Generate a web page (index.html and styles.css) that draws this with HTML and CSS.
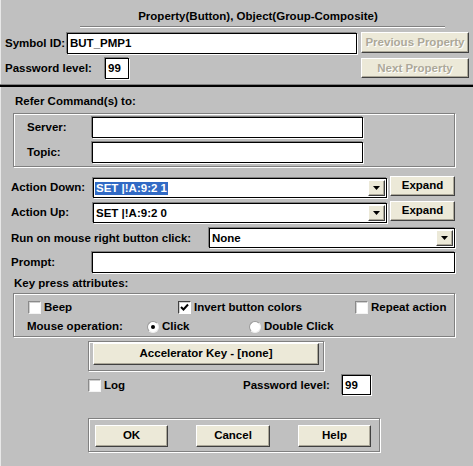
FILE: index.html
```html
<!DOCTYPE html>
<html>
<head>
<meta charset="utf-8">
<link rel="stylesheet" href="styles.css">
</head>
<body>
<div class="top">
  <div class="title">Property(Button), Object(Group-Composite)</div>
  <div class="title-rule"></div>
  <div class="row row-sym">
    <span class="lbl lbl-sym">Symbol ID:</span>
    <div class="field f-sym">BUT_PMP1</div>
    <div class="btn btn-nav disabled">Previous Property</div>
  </div>
  <div class="row row-pw">
    <span class="lbl lbl-pw">Password level:</span>
    <div class="field f-pw">99</div>
    <div class="btn btn-nav btn-next disabled">Next Property</div>
  </div>
</div>
<div class="sep"></div>
<div class="main">
  <div class="refer">Refer Command(s) to:</div>
  <div class="group g1">
    <div class="srow">
      <span class="lbl lbl-srv">Server:</span>
      <div class="field f-srv"></div>
    </div>
    <div class="srow">
      <span class="lbl lbl-srv">Topic:</span>
      <div class="field f-srv"></div>
    </div>
  </div>
  <div class="arow arow-down">
    <span class="lbl lbl-act">Action Down:</span>
    <div class="combo c-act"><span class="sel">SET |!A:9:2 1</span><span class="drop"><svg width="7" height="4" viewBox="0 0 7 4"><path d="M0 0H7L3.5 4Z" fill="#000"/></svg></span></div>
    <div class="btn btn-exp">Expand</div>
  </div>
  <div class="arow arow-up">
    <span class="lbl lbl-act">Action Up:</span>
    <div class="combo c-act"><span class="ctext">SET |!A:9:2 0</span><span class="drop"><svg width="7" height="4" viewBox="0 0 7 4"><path d="M0 0H7L3.5 4Z" fill="#000"/></svg></span></div>
    <div class="btn btn-exp">Expand</div>
  </div>
  <div class="rrow">
    <span class="lbl lbl-run">Run on mouse right button click:</span>
    <div class="combo c-run"><span class="ctext">None</span><span class="drop"><svg width="7" height="4" viewBox="0 0 7 4"><path d="M0 0H7L3.5 4Z" fill="#000"/></svg></span></div>
  </div>
  <div class="prow">
    <span class="lbl lbl-prompt">Prompt:</span>
    <div class="field f-prompt"></div>
  </div>
  <div class="keylbl">Key press attributes:</div>
  <div class="group g2">
    <div class="krow">
      <div class="cell c1"><span class="cb"></span><span class="ctl">Beep</span></div>
      <div class="cell c2"><span class="cb checked"><svg width="9" height="9" viewBox="0 0 9 9"><path d="M1 4L3.5 6.5L8 1.5" stroke="#000" stroke-width="2" fill="none"/></svg></span><span class="ctl">Invert button colors</span></div>
      <div class="cell c3"><span class="cb"></span><span class="ctl">Repeat action</span></div>
    </div>
    <div class="krow krow2">
      <div class="cell m1">Mouse operation:</div>
      <div class="cell m2"><span class="rb on"></span><span class="ctl">Click</span></div>
      <div class="cell m3"><span class="rb"></span><span class="ctl">Double Click</span></div>
    </div>
  </div>
  <div class="group accbox">
    <div class="btn btn-acc">Accelerator Key - [none]</div>
  </div>
  <div class="lrow">
    <div class="cell l1"><span class="cb"></span><span class="ctl">Log</span></div>
    <span class="lbl lbl-pw2">Password level:</span>
    <div class="field f-pw2">99</div>
  </div>
  <div class="group btnbox">
    <div class="btn btn-dlg">OK</div>
    <div class="btn btn-dlg">Cancel</div>
    <div class="btn btn-dlg">Help</div>
  </div>
</div>
</body>
</html>
```
FILE: styles.css
```css
* { box-sizing: border-box; }
html, body { margin: 0; padding: 0; }
body {
  width: 473px;
  height: 466px;
  overflow: hidden;
  background: #c0c0c0;
  font-family: "Liberation Sans", Arial, sans-serif;
  font-weight: bold;
  font-size: 11.5px;
  line-height: 13px;
  color: #000;
  box-shadow: inset 1px 0 #e8e8e8;
}
.top { height: 84px; padding-top: 10px; }
.title { margin-left: 76px; width: 364px; text-align: center; height: 13px; white-space: nowrap; }
.title-rule { margin: 3px 0 0 80px; width: 365px; border-top: 1px solid #808080; border-bottom: 1px solid #fff; }
.row { display: flex; align-items: flex-start; height: 22px; padding-left: 5px; padding-right: 4px; }
.row-sym { margin-top: 4px; }
.row-pw { margin-top: 3px; }
.lbl { white-space: nowrap; flex: none; }
.row .lbl { line-height: 22px; }
.lbl-sym { width: 62px; }
.lbl-pw { width: 100px; }
.field {
  background: #fff;
  border: 1px solid #000;
  box-shadow: -1px -1px #808080, 1px 1px #fff;
  padding-left: 2px;
  white-space: nowrap;
  flex: none;
}
.f-sym { width: 290px; height: 21px; margin-top: 1px; line-height: 19px; }
.f-pw { width: 24px; height: 21px; margin-top: 1px; line-height: 19px; }
.btn {
  background: #ece9d8;
  border: 1px solid;
  border-color: #fff #404040 #404040 #fff;
  box-shadow: inset -1px -1px #aca899;
  text-align: center;
  white-space: nowrap;
  flex: none;
}
.btn.disabled { color: #aca899; text-shadow: 1px 1px #fff; }
.btn-nav { margin-left: auto; width: 108px; height: 21px; line-height: 18px; }
.btn-next { margin-top: 1px; height: 20px; }
.sep { height: 3px; border-top: 1px solid #808080; background: #000; }
.refer { margin: 8px 0 0 15px; height: 13px; }
.group {
  border: 1px solid #808080;
  box-shadow: inset 1px 1px #fff, 1px 1px #fff;
}
.g1 { margin: 5px 18px 0 13px; height: 54px; padding: 3px 0 0 13px; }
.srow { display: flex; height: 21px; }
.srow + .srow { margin-top: 4px; }
.srow .lbl { line-height: 21px; }
.lbl-srv { width: 65px; }
.f-srv { width: 271px; height: 21px; }
.arow { display: flex; align-items: flex-start; height: 22px; padding-left: 11px; }
.arow-down { margin-top: 9px; }
.arow-up { margin-top: 3px; }
.arow .lbl { line-height: 22px; }
.lbl-act { width: 82px; }
.combo {
  background: #fff;
  border: 1px solid #000;
  box-shadow: -1px -1px #808080, 1px 1px #fff;
  display: flex;
  align-items: center;
  flex: none;
  white-space: nowrap;
}
.c-act { width: 294px; height: 20px; margin-top: 2px; }
.sel { background: #316ac5; color: #fff; margin-left: 1px; padding: 0 1px; line-height: 13px; }
.ctext { margin-left: 2px; }
.drop {
  margin-left: auto;
  margin-right: 1px;
  width: 17px;
  height: 16px;
  background: #ece9d8;
  border: 1px solid;
  border-color: #fff #404040 #404040 #fff;
  box-shadow: inset -1px -1px #aca899;
  display: flex;
  align-items: center;
  justify-content: center;
}
.btn-exp { margin-left: 3px; width: 65px; height: 20px; line-height: 17px; }
.rrow { display: flex; height: 20px; margin-top: 5px; padding-left: 11px; }
.rrow .lbl { line-height: 20px; }
.lbl-run { width: 198px; }
.c-run { width: 246px; height: 20px; }
.prow { display: flex; height: 21px; margin-top: 4px; padding-left: 11px; }
.prow .lbl { line-height: 21px; }
.lbl-prompt { width: 81px; }
.f-prompt { width: 363px; height: 21px; }
.keylbl { margin: 4px 0 0 14px; height: 13px; }
.g2 { margin: 3px 18px 0 13px; height: 44px; padding: 6px 0 0 13px; }
.krow { display: flex; height: 15px; line-height: 15px; }
.krow2 { margin-top: 4px; }
.cell { display: flex; align-items: center; flex: none; white-space: nowrap; }
.c1 { width: 150px; margin-left: 1px; }
.c2 { width: 177px; }
.m1 { width: 120px; }
.m2 { width: 102px; }
.cb {
  width: 13px;
  height: 13px;
  background: #fff;
  border: 1px solid;
  border-color: #8a8a8a #f4f4f4 #f4f4f4 #8a8a8a;
  box-shadow: inset 1px 1px #d0d0d0;
  flex: none;
  display: flex;
  align-items: center;
  justify-content: center;
}
.cb.checked { border-color: #404040 #fff #fff #404040; }
.ctl { margin-left: 3px; }
.rb {
  width: 12px;
  height: 12px;
  border-radius: 50%;
  background: #fff;
  border: 1px solid;
  border-color: #9a9a9a #eee #eee #9a9a9a;
  flex: none;
  display: flex;
  align-items: center;
  justify-content: center;
}
.rb.on::after { content: ""; width: 4px; height: 4px; border-radius: 50%; background: #000; }
.accbox { margin: 4px 0 0 88px; width: 236px; height: 30px; padding: 1px 0 0 4px; }
.btn-acc { width: 226px; height: 22px; line-height: 19px; }
.lrow { display: flex; align-items: center; height: 20px; margin-top: 4px; padding-left: 88px; }
.l1 { width: 155px; }
.lbl-pw2 { width: 99px; }
.f-pw2 { width: 29px; height: 20px; line-height: 18px; }
.btnbox { display: flex; gap: 28px; margin: 23px 0 0 88px; width: 292px; height: 34px; padding: 6px 0 0 6px; }
.btn-dlg { width: 73px; height: 22px; line-height: 19px; }
.btn-dlg:nth-child(2) { width: 74px; }
```
